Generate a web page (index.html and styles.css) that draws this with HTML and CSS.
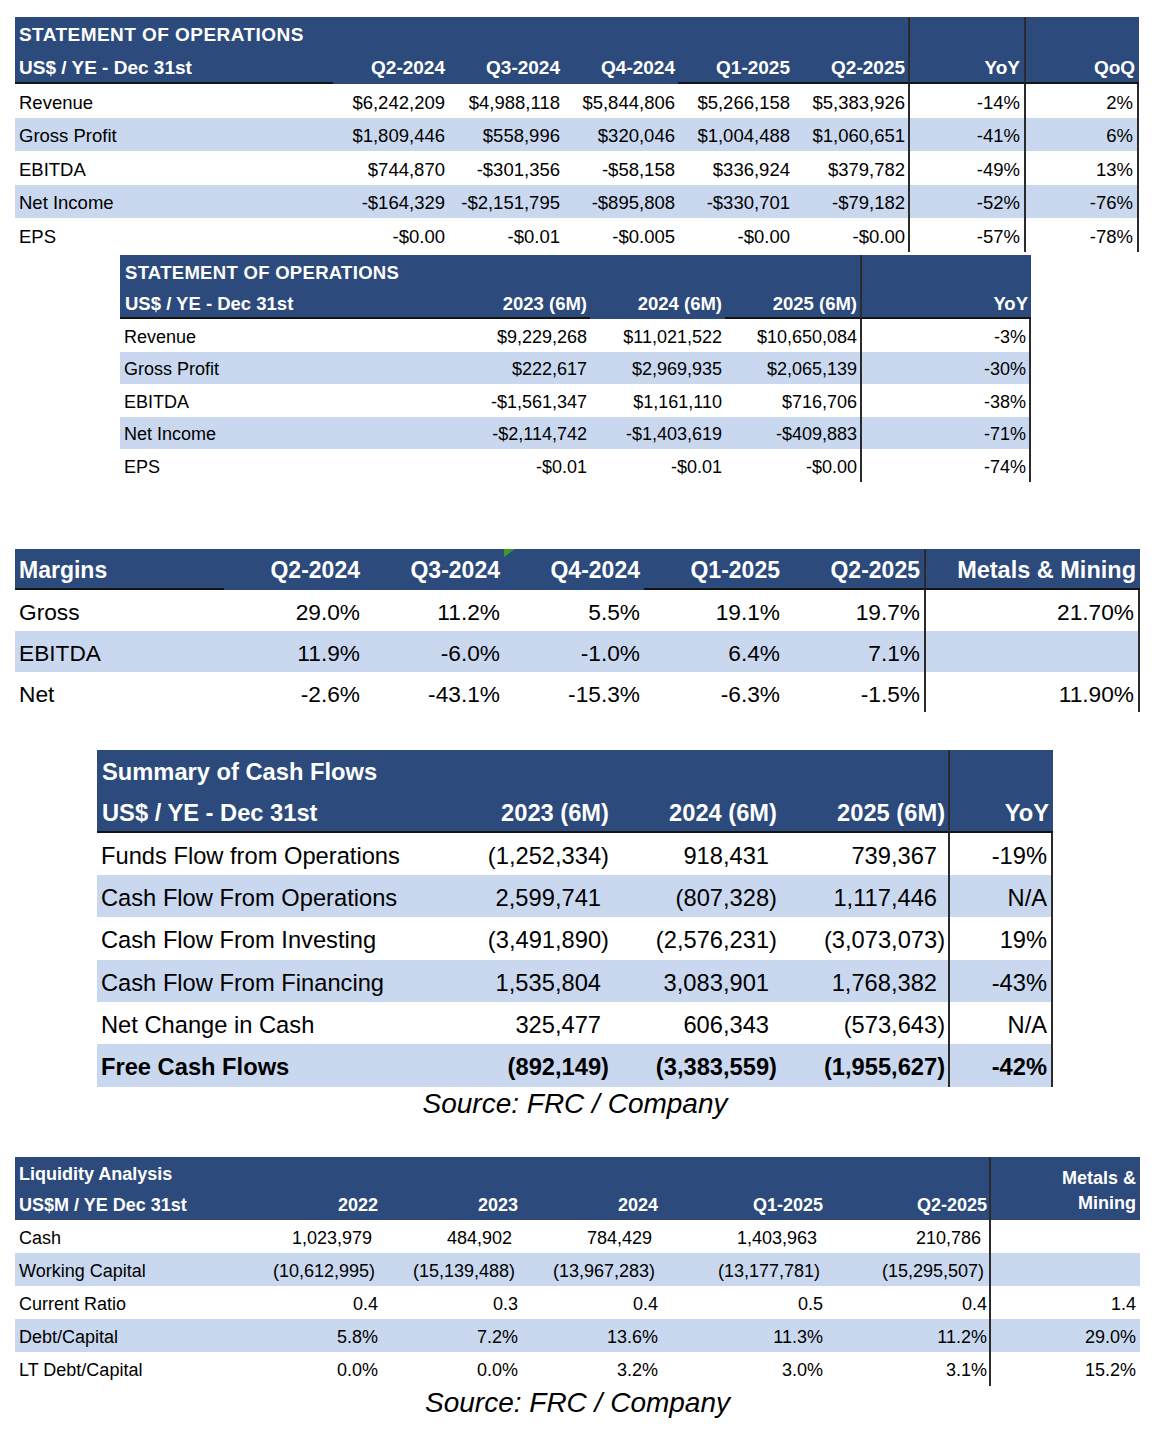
FILE: index.html
```html
<!DOCTYPE html>
<html>
<head>
<meta charset="utf-8">
<title>Financial Tables</title>
<link rel="stylesheet" href="styles.css">
</head>
<body>
<div class="page">

<table class="tbl t1">
  <colgroup><col class="c-lab"><col class="c-q"><col class="c-q"><col class="c-q"><col class="c-q"><col class="c-q"><col class="c-yoy"><col class="c-qoq"></colgroup>
  <tr class="hd hd1"><td colspan="6" class="lab title">STATEMENT OF OPERATIONS</td><td class="vl"></td><td class="vl"></td></tr>
  <tr class="hd hd2"><td class="lab ln">US$ / YE - Dec 31st</td><td class="r">Q2-2024</td><td class="r">Q3-2024</td><td class="r">Q4-2024</td><td class="r ln">Q1-2025</td><td class="r ln">Q2-2025</td><td class="r ln vl">YoY</td><td class="r ln vl">QoQ</td></tr>
  <tr class="b1"><td class="lab">Revenue</td><td class="r">$6,242,209</td><td class="r">$4,988,118</td><td class="r">$5,844,806</td><td class="r">$5,266,158</td><td class="r">$5,383,926</td><td class="r vl">-14%</td><td class="r vl vr">2%</td></tr>
  <tr class="b2 alt"><td class="lab">Gross Profit</td><td class="r">$1,809,446</td><td class="r">$558,996</td><td class="r">$320,046</td><td class="r">$1,004,488</td><td class="r">$1,060,651</td><td class="r vl">-41%</td><td class="r vl vr">6%</td></tr>
  <tr class="b1"><td class="lab">EBITDA</td><td class="r">$744,870</td><td class="r">-$301,356</td><td class="r">-$58,158</td><td class="r">$336,924</td><td class="r">$379,782</td><td class="r vl">-49%</td><td class="r vl vr">13%</td></tr>
  <tr class="b2 alt"><td class="lab">Net Income</td><td class="r">-$164,329</td><td class="r">-$2,151,795</td><td class="r">-$895,808</td><td class="r">-$330,701</td><td class="r">-$79,182</td><td class="r vl">-52%</td><td class="r vl vr">-76%</td></tr>
  <tr class="b1"><td class="lab">EPS</td><td class="r">-$0.00</td><td class="r">-$0.01</td><td class="r">-$0.005</td><td class="r">-$0.00</td><td class="r">-$0.00</td><td class="r vl">-57%</td><td class="r vl vr">-78%</td></tr>
</table>

<table class="tbl t2">
  <colgroup><col class="c-lab"><col class="c-y"><col class="c-y"><col class="c-y"><col class="c-yoy"></colgroup>
  <tr class="hd hd1"><td colspan="4" class="lab title">STATEMENT OF OPERATIONS</td><td class="vl"></td></tr>
  <tr class="hd hd2"><td class="lab ln">US$ / YE - Dec 31st</td><td class="r ln">2023 (6M)</td><td class="r">2024 (6M)</td><td class="r ln">2025 (6M)</td><td class="r ln vl">YoY</td></tr>
  <tr class="b1"><td class="lab">Revenue</td><td class="r">$9,229,268</td><td class="r">$11,021,522</td><td class="r">$10,650,084</td><td class="r vl vr">-3%</td></tr>
  <tr class="b2 alt"><td class="lab">Gross Profit</td><td class="r">$222,617</td><td class="r">$2,969,935</td><td class="r">$2,065,139</td><td class="r vl vr">-30%</td></tr>
  <tr class="b1"><td class="lab">EBITDA</td><td class="r">-$1,561,347</td><td class="r">$1,161,110</td><td class="r">$716,706</td><td class="r vl vr">-38%</td></tr>
  <tr class="b2 alt"><td class="lab">Net Income</td><td class="r">-$2,114,742</td><td class="r">-$1,403,619</td><td class="r">-$409,883</td><td class="r vl vr">-71%</td></tr>
  <tr class="b1"><td class="lab">EPS</td><td class="r">-$0.01</td><td class="r">-$0.01</td><td class="r">-$0.00</td><td class="r vl vr">-74%</td></tr>
</table>

<table class="tbl mrg">
  <colgroup><col class="c-lab"><col class="c-q"><col class="c-q"><col class="c-q"><col class="c-q"><col class="c-q"><col class="c-mm"></colgroup>
  <tr class="hd hd2"><td class="lab ln">Margins</td><td class="r">Q2-2024</td><td class="r">Q3-2024</td><td class="r flag">Q4-2024</td><td class="r ln">Q1-2025</td><td class="r ln">Q2-2025</td><td class="r ln vl mmh">Metals &amp; Mining</td></tr>
  <tr class="b1"><td class="lab">Gross</td><td class="r">29.0%</td><td class="r">11.2%</td><td class="r">5.5%</td><td class="r">19.1%</td><td class="r">19.7%</td><td class="r vl vr">21.70%</td></tr>
  <tr class="b2 alt"><td class="lab">EBITDA</td><td class="r">11.9%</td><td class="r">-6.0%</td><td class="r">-1.0%</td><td class="r">6.4%</td><td class="r">7.1%</td><td class="r vl vr"></td></tr>
  <tr class="b3"><td class="lab">Net</td><td class="r">-2.6%</td><td class="r">-43.1%</td><td class="r">-15.3%</td><td class="r">-6.3%</td><td class="r">-1.5%</td><td class="r vl vr">11.90%</td></tr>
</table>

<div class="wrap cf-wrap">
<table class="tbl cf">
  <colgroup><col class="c-lab"><col class="c-y"><col class="c-y"><col class="c-y"><col class="c-yoy"></colgroup>
  <tr class="hd hd1"><td colspan="4" class="lab">Summary of Cash Flows</td><td class="vl"></td></tr>
  <tr class="hd hd2"><td class="lab ln">US$ / YE - Dec 31st</td><td class="r ln">2023 (6M)</td><td class="r ln">2024 (6M)</td><td class="r ln">2025 (6M)</td><td class="r ln vl">YoY</td></tr>
  <tr class="b1"><td class="lab">Funds Flow from Operations</td><td class="r">(1,252,334)</td><td class="r p">918,431</td><td class="r p">739,367</td><td class="r vl vr">-19%</td></tr>
  <tr class="b2 alt"><td class="lab">Cash Flow From Operations</td><td class="r p">2,599,741</td><td class="r">(807,328)</td><td class="r p">1,117,446</td><td class="r vl vr">N/A</td></tr>
  <tr class="b3"><td class="lab">Cash Flow From Investing</td><td class="r">(3,491,890)</td><td class="r">(2,576,231)</td><td class="r">(3,073,073)</td><td class="r vl vr">19%</td></tr>
  <tr class="b1 alt"><td class="lab">Cash Flow From Financing</td><td class="r p">1,535,804</td><td class="r p">3,083,901</td><td class="r p">1,768,382</td><td class="r vl vr">-43%</td></tr>
  <tr class="b2"><td class="lab">Net Change in Cash</td><td class="r p">325,477</td><td class="r p">606,343</td><td class="r">(573,643)</td><td class="r vl vr">N/A</td></tr>
  <tr class="b3 alt bold"><td class="lab">Free Cash Flows</td><td class="r">(892,149)</td><td class="r">(3,383,559)</td><td class="r">(1,955,627)</td><td class="r vl vr">-42%</td></tr>
</table>
<p class="src">Source: FRC / Company</p>
</div>

<div class="wrap liq-wrap">
<table class="tbl liq">
  <colgroup><col class="c-lab"><col class="c-22"><col class="c-y"><col class="c-y"><col class="c-q"><col class="c-q2"><col class="c-mm"></colgroup>
  <tr class="hd hd1"><td colspan="6" class="lab">Liquidity Analysis</td><td rowspan="2" class="r vl mm">Metals &amp;<br>Mining</td></tr>
  <tr class="hd hd2"><td class="lab">US$M / YE Dec 31st</td><td class="r">2022</td><td class="r">2023</td><td class="r">2024</td><td class="r">Q1-2025</td><td class="r">Q2-2025</td></tr>
  <tr class="b1"><td class="lab">Cash</td><td class="r p">1,023,979</td><td class="r p">484,902</td><td class="r p">784,429</td><td class="r p">1,403,963</td><td class="r p">210,786</td><td class="r vl"></td></tr>
  <tr class="b1 alt"><td class="lab">Working Capital</td><td class="r n">(10,612,995)</td><td class="r n">(15,139,488)</td><td class="r n">(13,967,283)</td><td class="r n">(13,177,781)</td><td class="r n">(15,295,507)</td><td class="r vl"></td></tr>
  <tr class="b1"><td class="lab">Current Ratio</td><td class="r">0.4</td><td class="r">0.3</td><td class="r">0.4</td><td class="r">0.5</td><td class="r">0.4</td><td class="r vl">1.4</td></tr>
  <tr class="b1 alt"><td class="lab">Debt/Capital</td><td class="r">5.8%</td><td class="r">7.2%</td><td class="r">13.6%</td><td class="r">11.3%</td><td class="r">11.2%</td><td class="r vl">29.0%</td></tr>
  <tr class="b2"><td class="lab">LT Debt/Capital</td><td class="r">0.0%</td><td class="r">0.0%</td><td class="r">3.2%</td><td class="r">3.0%</td><td class="r">3.1%</td><td class="r vl">15.2%</td></tr>
</table>
<p class="src">Source: FRC / Company</p>
</div>

</div>
</body>
</html>
```

FILE: styles.css
```css
body {
  margin: 0;
  background: #ffffff;
  color: #000000;
  font-family: "Liberation Sans", Arial, sans-serif;
}

.page {
  padding-top: 17px;
}

.tbl {
  border-collapse: separate;
  border-spacing: 0;
  table-layout: fixed;
}

.tbl td {
  box-sizing: border-box;
  padding: 4px 3px 0 3px;
  white-space: nowrap;
  vertical-align: middle;
  line-height: 1.1;
}

.tbl td.lab { padding-left: 4px; text-align: left; }
.tbl td.r { text-align: right; }

.hd td {
  background: #2c4a7c;
  color: #ffffff;
  font-weight: bold;
}

.hd2 td { border-bottom: 2px solid #2c4a7c; }
.hd2 td.ln { border-bottom-color: #141414; }

.alt td { background: #c9d8ef; }
.bold td { font-weight: bold; }

.tbl td.vl { border-left: 2px solid #2b2b2b; }
.tbl td.vr { border-right: 2px solid #2b2b2b; }

/* Table 1: quarterly statement */
.t1 { margin-left: 15px; width: 1124px; font-size: 18.5px; }
.t1 .c-lab { width: 318px; }
.t1 .c-q { width: 115px; }
.t1 .c-yoy { width: 116px; }
.t1 .c-qoq { width: 115px; }
.t1 .hd td { font-size: 19px; }
.t1 .hd td.title { letter-spacing: 0.45px; }
.t1 .hd1 { height: 33px; }
.t1 .hd2 { height: 34px; }
.t1 .b1 { height: 34px; }
.t1 .b2 { height: 33px; }
.t1 td.vl.r { padding-right: 4px; }

/* Table 2: six-month statement */
.t2 { margin-left: 120px; margin-top: 3px; width: 911px; font-size: 18px; }
.t2 .c-lab { width: 335px; }
.t2 .c-y { width: 135px; }
.t2 .c-yoy { width: 171px; }
.t2 .hd td { font-size: 18.5px; }
.t2 .hd td.lab { padding-left: 5px; }
.t2 .hd td.title { letter-spacing: 0.3px; }
.t2 .hd1 { height: 32px; }
.t2 .hd2 { height: 32px; }
.t2 .b1 { height: 33px; }
.t2 .b2 { height: 32px; }

/* Margins */
.mrg { margin-left: 15px; margin-top: 67px; width: 1125px; font-size: 22.7px; }
.mrg .c-lab { width: 209px; }
.mrg .c-q { width: 140px; }
.mrg .c-mm { width: 216px; }
.mrg .hd td { font-size: 23px; }
.mrg .hd td.mmh { font-size: 23.5px; }
.mrg .hd2 { height: 41px; }
.mrg .b1, .mrg .b2 { height: 41px; }
.mrg .b3 { height: 40px; }
.mrg td.r { padding-right: 4px; }
.mrg td.flag { position: relative; }
.mrg td.flag::before {
  content: "";
  position: absolute;
  top: 0;
  left: 0;
  width: 0;
  height: 0;
  border-top: 8px solid #3b9a2b;
  border-right: 11px solid transparent;
}

/* Wrappers with source caption */
.wrap { margin-top: 38px; }
.src {
  margin: 0;
  height: 32px;
  line-height: 34px;
  text-align: center;
  font-style: italic;
  font-size: 28px;
}

/* Cash flows */
.cf-wrap { margin-left: 97px; width: 956px; }
.cf { width: 956px; font-size: 23.7px; }
.cf .c-lab { width: 347px; }
.cf .c-y { width: 168px; }
.cf .c-yoy { width: 105px; }
.cf .hd td.lab { padding-left: 5px; }
.cf .hd1 { height: 41px; }
.cf .hd2 { height: 42px; }
.cf .b1, .cf .b2 { height: 42px; }
.cf .b3 { height: 43px; }
.cf td.p { padding-right: 11px; }
.cf td.vl.r { padding-right: 4px; }

/* Liquidity */
.liq-wrap { margin-left: 15px; width: 1125px; }
.liq { width: 1125px; font-size: 18px; }
.liq .c-lab { width: 223px; }
.liq .c-22 { width: 142px; }
.liq .c-y { width: 140px; }
.liq .c-q { width: 165px; }
.liq .c-q2 { width: 164px; }
.liq .c-mm { width: 151px; }
.liq .hd1 { height: 31px; }
.liq .hd2 { height: 32px; }
.liq .hd2 td { border-bottom: 0; }
.liq .b1 { height: 33px; }
.liq .b2 { height: 34px; }
.liq td.r { padding-right: 2px; }
.liq td.p { padding-right: 8px; }
.liq td.n { padding-right: 5px; }
.liq td.mm { line-height: 25px; padding-right: 4px; }
.liq td.vl.r { padding-right: 4px; }
```
